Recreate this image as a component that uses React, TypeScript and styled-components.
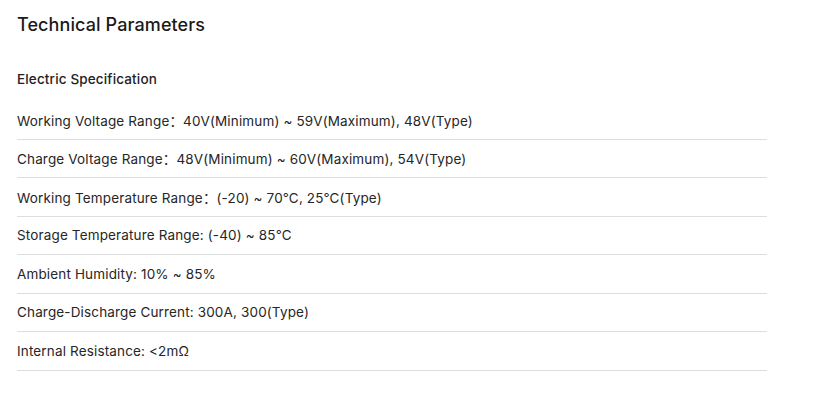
import React from 'react';
import styled, { createGlobalStyle } from 'styled-components';

const GlobalStyle = createGlobalStyle`
  body {
    margin: 0;
    background: #ffffff;
    font-family: Inter, "Noto Sans CJK SC", sans-serif;
    color: #222;
  }
`;

const Page = styled.div`
  width: 750px;
  padding: 13px 0 0 17px;
`;

const Title = styled.h2`
  margin: 0;
  font-size: 18px;
  font-weight: 500;
  line-height: 24px;
  letter-spacing: 0.1px;
  color: #1a1a1a;
`;

const Subtitle = styled.h3`
  margin: 30px 0 10px;
  font-size: 13.5px;
  font-weight: 500;
  line-height: 24px;
  letter-spacing: 0.15px;
  color: #222;
`;

const List = styled.ul`
  list-style: none;
  margin: 0;
  padding: 0;
`;

const Row = styled.li`
  display: flex;
  align-items: center;
  height: 38.5px;
  box-sizing: border-box;
  border-bottom: 1px solid #dedede;
  font-size: 13.5px;
  letter-spacing: 0.15px;
  color: #262626;
`;

const specs = [
  'Working Voltage Range：40V(Minimum) ~ 59V(Maximum), 48V(Type)',
  'Charge Voltage Range：48V(Minimum) ~ 60V(Maximum), 54V(Type)',
  'Working Temperature Range：(-20) ~ 70℃, 25℃(Type)',
  'Storage Temperature Range: (-40) ~ 85℃',
  'Ambient Humidity: 10% ~ 85%',
  'Charge-Discharge Current: 300A, 300(Type)',
  'Internal Resistance: <2mΩ',
];

export default function App() {
  return (
    <>
      <GlobalStyle />
      <Page>
        <Title>Technical Parameters</Title>
        <Subtitle>Electric Specification</Subtitle>
        <List>
          {specs.map((s) => (
            <Row key={s}>{s}</Row>
          ))}
        </List>
      </Page>
    </>
  );
}
